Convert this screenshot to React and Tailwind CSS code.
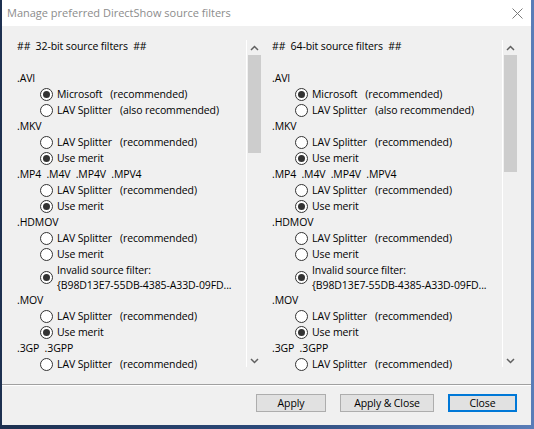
import React from "react";

const SECTIONS = [
  {
    ext: ".AVI",
    options: [
      { label: "Microsoft   (recommended)", checked: true },
      { label: "LAV Splitter   (also recommended)" },
    ],
  },
  {
    ext: ".MKV",
    options: [{ label: "LAV Splitter   (recommended)" }, { label: "Use merit", checked: true }],
  },
  {
    ext: ".MP4  .M4V  .MP4V  .MPV4",
    options: [{ label: "LAV Splitter   (recommended)" }, { label: "Use merit", checked: true }],
  },
  {
    ext: ".HDMOV",
    options: [
      { label: "LAV Splitter   (recommended)" },
      { label: "Use merit" },
      { label: "Invalid source filter:", sub: "{B98D13E7-55DB-4385-A33D-09FD...", checked: true },
    ],
  },
  {
    ext: ".MOV",
    options: [{ label: "LAV Splitter   (recommended)" }, { label: "Use merit", checked: true }],
  },
  {
    ext: ".3GP  .3GPP",
    options: [{ label: "LAV Splitter   (recommended)" }],
  },
];

function Radio({ checked }) {
  return (
    <span className="w-[13px] h-[13px] shrink-0 rounded-full border border-[#333333] bg-white flex items-center justify-center">
      {checked && <span className="w-[7px] h-[7px] rounded-full bg-[#333333]" />}
    </span>
  );
}

function Chevron({ up }) {
  return (
    <svg width="9" height="6" viewBox="0 0 9 6" fill="none">
      <polyline
        points={up ? "1,5 4.5,1.5 8,5" : "1,1 4.5,4.5 8,1"}
        stroke="#606060"
        strokeWidth="1.5"
      />
    </svg>
  );
}

function FilterPanel({ bits, padLeft, thumb }) {
  return (
    <div className={`flex h-[333px] ${padLeft}`}>
      <div className="flex-1 overflow-hidden whitespace-pre leading-[16px]">
        <div className="h-[16px]">{`##  ${bits}-bit source filters  ##`}</div>
        <div className="h-[16px]" />
        {SECTIONS.map((s) => (
          <div key={s.ext}>
            <div className="h-[16px]">{s.ext}</div>
            {s.options.map((o) =>
              o.sub ? (
                <div key={o.label} className="h-[30px] pt-px pl-[23px] flex items-center gap-[4px]">
                  <Radio checked={o.checked} />
                  <div className="flex flex-col">
                    <span className="h-[15px] leading-[15px]">{o.label}</span>
                    <span className="h-[15px] leading-[15px]">{o.sub}</span>
                  </div>
                </div>
              ) : (
                <div key={o.label} className="h-[16px] pl-[23px] flex items-center gap-[4px]">
                  <Radio checked={o.checked} />
                  <span>{o.label}</span>
                </div>
              )
            )}
          </div>
        ))}
      </div>
      <div className="mt-[2px] h-[327px] w-[16px] border-l border-white flex flex-col">
        <div className="h-[15px] flex items-center justify-center">
          <Chevron up />
        </div>
        <div className={`${thumb} mx-[1px] bg-[#cdcdcd]`} />
        <div className="flex-1" />
        <div className="h-[15px] flex items-center justify-center pt-[3px]">
          <Chevron />
        </div>
      </div>
    </div>
  );
}

export default function App() {
  return (
    <div className="w-[534px] h-[429px] bg-gradient-to-r from-[#1d3050] via-[#2c4a7a] to-[#5a7db8] pl-[2px] pr-[3px] pb-[4px]">
      <div
        className="h-full bg-[#f0f0f0] text-[10.5px] tracking-[-0.1px] text-black flex flex-col"
        style={{ fontFamily: '"Open Sans", sans-serif' }}
      >
        {/* title bar */}
        <div className="h-[26px] bg-white flex items-center justify-between pl-[5px] pr-[8px]">
          <span className="text-[#8c8c8c] text-[11px] tracking-normal">Manage preferred DirectShow source filters</span>
          <svg width="11" height="11" viewBox="0 0 11 11">
            <path d="M0.5 0.5 L10.5 10.5 M10.5 0.5 L0.5 10.5" stroke="#7a7a7a" strokeWidth="1" />
          </svg>
        </div>

        <div className="flex-1 pt-[12px] flex">
          <div className="w-[260px]">
            <FilterPanel bits="32" padLeft="pl-[15px]" thumb="h-[98px]" />
          </div>
          <div className="w-[256px]">
            <FilterPanel bits="64" padLeft="pl-[10px]" thumb="h-[117px]" />
          </div>
        </div>

        {/* button bar */}
        <div className="h-[41px] border-t border-[#a0a0a0]">
          <div className="h-full border-t border-white flex justify-end items-start pt-[8px] pr-[14px] gap-[14px]">
            <button className="w-[70px] h-[18px] bg-[#e1e1e1] border border-[#adadad] leading-[16px]">Apply</button>
            <button className="w-[94px] h-[18px] bg-[#e1e1e1] border border-[#adadad] leading-[16px]">Apply &amp; Close</button>
            <button className="w-[69px] h-[18px] bg-[#e1e1e1] border-2 border-[#0078d7] leading-[14px]">Close</button>
          </div>
        </div>
      </div>
    </div>
  );
}
